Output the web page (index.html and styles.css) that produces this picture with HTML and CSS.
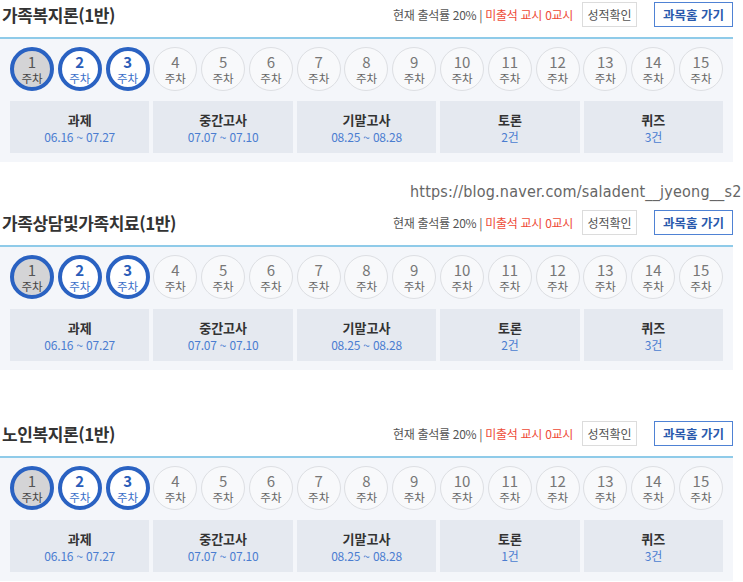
FILE: index.html
```html
<!DOCTYPE html>
<html lang="ko">
<head>
<meta charset="utf-8">
<link rel="stylesheet" href="styles.css">
</head>
<body>
<div class="page">
  <section class="course">
    <div class="head">
      <h2 class="title">가족복지론(1반)</h2>
      <div class="meta">
        <span class="rate">현재 출석률 20% | <em class="absent">미출석 교시 0교시</em></span>
        <button class="btn btn-grade">성적확인</button>
        <button class="btn btn-home">과목홈 가기</button>
      </div>
    </div>
    <div class="panel">
      <div class="weeks">
        <div class="wk wk-cur"><b>1</b><span>주차</span></div>
        <div class="wk wk-on"><b>2</b><span>주차</span></div>
        <div class="wk wk-on"><b>3</b><span>주차</span></div>
        <div class="wk"><b>4</b><span>주차</span></div>
        <div class="wk"><b>5</b><span>주차</span></div>
        <div class="wk"><b>6</b><span>주차</span></div>
        <div class="wk"><b>7</b><span>주차</span></div>
        <div class="wk"><b>8</b><span>주차</span></div>
        <div class="wk"><b>9</b><span>주차</span></div>
        <div class="wk"><b>10</b><span>주차</span></div>
        <div class="wk"><b>11</b><span>주차</span></div>
        <div class="wk"><b>12</b><span>주차</span></div>
        <div class="wk"><b>13</b><span>주차</span></div>
        <div class="wk"><b>14</b><span>주차</span></div>
        <div class="wk"><b>15</b><span>주차</span></div>
      </div>
      <div class="cards">
        <div class="card"><strong>과제</strong><span>06.16 ~ 07.27</span></div>
        <div class="card"><strong>중간고사</strong><span>07.07 ~ 07.10</span></div>
        <div class="card"><strong>기말고사</strong><span>08.25 ~ 08.28</span></div>
        <div class="card"><strong>토론</strong><span>2건</span></div>
        <div class="card"><strong>퀴즈</strong><span>3건</span></div>
      </div>
    </div>
  </section>

  <section class="course course-2">
    <div class="watermark">https://blog.naver.com/saladent__jyeong__s2</div>
    <div class="head">
      <h2 class="title">가족상담및가족치료(1반)</h2>
      <div class="meta">
        <span class="rate">현재 출석률 20% | <em class="absent">미출석 교시 0교시</em></span>
        <button class="btn btn-grade">성적확인</button>
        <button class="btn btn-home">과목홈 가기</button>
      </div>
    </div>
    <div class="panel">
      <div class="weeks">
        <div class="wk wk-cur"><b>1</b><span>주차</span></div>
        <div class="wk wk-on"><b>2</b><span>주차</span></div>
        <div class="wk wk-on"><b>3</b><span>주차</span></div>
        <div class="wk"><b>4</b><span>주차</span></div>
        <div class="wk"><b>5</b><span>주차</span></div>
        <div class="wk"><b>6</b><span>주차</span></div>
        <div class="wk"><b>7</b><span>주차</span></div>
        <div class="wk"><b>8</b><span>주차</span></div>
        <div class="wk"><b>9</b><span>주차</span></div>
        <div class="wk"><b>10</b><span>주차</span></div>
        <div class="wk"><b>11</b><span>주차</span></div>
        <div class="wk"><b>12</b><span>주차</span></div>
        <div class="wk"><b>13</b><span>주차</span></div>
        <div class="wk"><b>14</b><span>주차</span></div>
        <div class="wk"><b>15</b><span>주차</span></div>
      </div>
      <div class="cards">
        <div class="card"><strong>과제</strong><span>06.16 ~ 07.27</span></div>
        <div class="card"><strong>중간고사</strong><span>07.07 ~ 07.10</span></div>
        <div class="card"><strong>기말고사</strong><span>08.25 ~ 08.28</span></div>
        <div class="card"><strong>토론</strong><span>2건</span></div>
        <div class="card"><strong>퀴즈</strong><span>3건</span></div>
      </div>
    </div>
  </section>

  <section class="course course-3">
    <div class="head">
      <h2 class="title">노인복지론(1반)</h2>
      <div class="meta">
        <span class="rate">현재 출석률 20% | <em class="absent">미출석 교시 0교시</em></span>
        <button class="btn btn-grade">성적확인</button>
        <button class="btn btn-home">과목홈 가기</button>
      </div>
    </div>
    <div class="panel">
      <div class="weeks">
        <div class="wk wk-cur"><b>1</b><span>주차</span></div>
        <div class="wk wk-on"><b>2</b><span>주차</span></div>
        <div class="wk wk-on"><b>3</b><span>주차</span></div>
        <div class="wk"><b>4</b><span>주차</span></div>
        <div class="wk"><b>5</b><span>주차</span></div>
        <div class="wk"><b>6</b><span>주차</span></div>
        <div class="wk"><b>7</b><span>주차</span></div>
        <div class="wk"><b>8</b><span>주차</span></div>
        <div class="wk"><b>9</b><span>주차</span></div>
        <div class="wk"><b>10</b><span>주차</span></div>
        <div class="wk"><b>11</b><span>주차</span></div>
        <div class="wk"><b>12</b><span>주차</span></div>
        <div class="wk"><b>13</b><span>주차</span></div>
        <div class="wk"><b>14</b><span>주차</span></div>
        <div class="wk"><b>15</b><span>주차</span></div>
      </div>
      <div class="cards">
        <div class="card"><strong>과제</strong><span>06.16 ~ 07.27</span></div>
        <div class="card"><strong>중간고사</strong><span>07.07 ~ 07.10</span></div>
        <div class="card"><strong>기말고사</strong><span>08.25 ~ 08.28</span></div>
        <div class="card"><strong>토론</strong><span>1건</span></div>
        <div class="card"><strong>퀴즈</strong><span>3건</span></div>
      </div>
    </div>
  </section>
</div>
</body>
</html>
```

FILE: styles.css
```css
html, body {
  margin: 0;
  padding: 0;
  background: #ffffff;
}
body {
  font-family: "Noto Sans CJK KR", "Noto Sans", sans-serif;
  color: #333;
  overflow: hidden;
}
.page {
  width: 733px;
}
.course {
  position: relative;
}
.course-2 {
  margin-top: 46px;
}
.course-3 {
  margin-top: 49px;
}
.head {
  height: 39px;
  box-sizing: border-box;
  padding-top: 2px;
  display: flex;
  justify-content: space-between;
  align-items: flex-start;
  border-bottom: 2px solid #8fcbe9;
}
.title {
  margin: 0 0 0 2px;
  font-size: 17px;
  line-height: 25px;
  font-weight: 700;
  color: #333;
  letter-spacing: -0.4px;
}
.meta {
  display: flex;
  align-items: center;
  height: 25px;
}
.rate {
  font-size: 12px;
  color: #555;
  letter-spacing: -0.3px;
  margin-right: 9px;
}
.absent {
  font-style: normal;
  color: #ee4a36;
}
.btn {
  font-family: inherit;
  height: 25px;
  box-sizing: border-box;
  background: #fff;
  padding: 0;
  margin: 0;
  cursor: pointer;
}
.btn-grade {
  width: 55px;
  border: 1px solid #dcdcdc;
  color: #555;
  font-size: 12px;
  margin-right: 17px;
}
.btn-home {
  width: 79px;
  border: 1px solid #4f82d4;
  color: #2a5aad;
  font-size: 12.5px;
  font-weight: 700;
}
.panel {
  background: #f4f6fa;
  padding: 8px 10px 9px 10px;
}
.weeks {
  display: flex;
  justify-content: space-between;
}
.wk {
  width: 44px;
  height: 44px;
  box-sizing: border-box;
  border-radius: 50%;
  border: 1px solid #dddfe3;
  background: #f8f9fb;
  display: flex;
  flex-direction: column;
  align-items: center;
  justify-content: center;
  color: #777;
}
.wk b {
  font-weight: 400;
  font-size: 15px;
  line-height: 18px;
}
.wk span {
  font-size: 11.5px;
  line-height: 15px;
  color: #666;
}
.wk-cur {
  border: 4px solid #2a62c2;
  background: #d4d4d6;
  color: #555;
}
.wk-cur span {
  color: #444;
}
.wk-on {
  border: 4px solid #2a62c2;
  background: #fff;
  color: #2a5cb8;
}
.wk-on b {
  font-weight: 700;
}
.wk-on span {
  color: #3b6fc9;
}
.cards {
  margin-top: 10px;
  display: flex;
  gap: 4px;
}
.card {
  flex: 1;
  height: 52px;
  box-sizing: border-box;
  padding-top: 10px;
  background: #e5e9f0;
  display: flex;
  flex-direction: column;
  align-items: center;
}
.card strong {
  font-size: 13px;
  line-height: 17px;
  font-weight: 700;
  color: #333;
}
.card span {
  font-size: 12px;
  line-height: 17px;
  color: #4b7dd0;
  letter-spacing: -0.2px;
}
.watermark {
  position: absolute;
  top: -26px;
  left: 410px;
  white-space: nowrap;
  font-family: "DejaVu Sans", sans-serif;
  font-stretch: condensed;
  font-size: 16px;
  line-height: 20px;
  color: #666;
  letter-spacing: 0.2px;
}
```
